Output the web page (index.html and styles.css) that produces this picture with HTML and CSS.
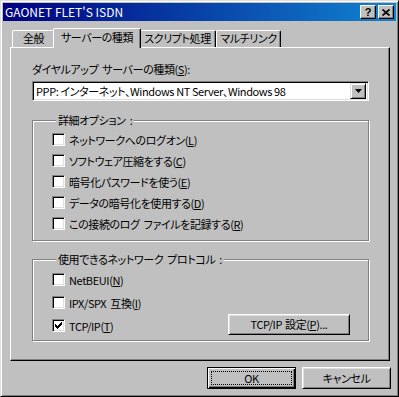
FILE: index.html
```html
<!DOCTYPE html>
<html lang="ja">
<head>
<meta charset="utf-8">
<title>GAONET FLET'S ISDN</title>
<link rel="stylesheet" href="styles.css">
</head>
<body>
<div class="window">
  <div class="titlebar">
    <span class="title">GAONET FLET'S ISDN</span>
    <div class="title-buttons">
      <span class="tbtn tbtn-help">?</span>
      <span class="tbtn"><svg width="8" height="7" viewBox="0 0 8 7"><path d="M0.5 0.5 L7.5 6.5 M7.5 0.5 L0.5 6.5" stroke="#000" stroke-width="1.7" fill="none"/></svg></span>
    </div>
  </div>
  <div class="body">
    <div class="tabs">
      <div class="tab tab-general">全般</div>
      <div class="tab tab-server active">サーバーの種類</div>
      <div class="tab tab-script">スクリプト処理</div>
      <div class="tab tab-multi">マルチリンク</div>
    </div>
    <div class="panel">
      <div class="label">ダイヤルアップ サーバーの種類(<u>S</u>):</div>
      <div class="combo">
        <span class="combo-text">PPP: インターネット、Windows NT Server、Windows 98</span>
        <span class="combo-btn"><svg width="7" height="4" viewBox="0 0 7 4"><polygon points="0,0 7,0 3.5,4" fill="#000"/></svg></span>
      </div>
      <fieldset class="group group-options">
        <legend>詳細オプション :</legend>
        <div class="check"><span class="box"></span><span>ネットワークへのログオン(<u>L</u>)</span></div>
        <div class="check"><span class="box"></span><span>ソフトウェア圧縮をする(<u>C</u>)</span></div>
        <div class="check"><span class="box"></span><span>暗号化パスワードを使う(<u>E</u>)</span></div>
        <div class="check"><span class="box"></span><span>データの暗号化を使用する(<u>D</u>)</span></div>
        <div class="check"><span class="box"></span><span>この接続のログ ファイルを記録する(<u>R</u>)</span></div>
      </fieldset>
      <fieldset class="group group-proto">
        <legend>使用できるネットワーク プロトコル :</legend>
        <div class="check"><span class="box"></span><span>NetBEUI(<u>N</u>)</span></div>
        <div class="check"><span class="box"></span><span>IPX/SPX 互換(<u>I</u>)</span></div>
        <div class="check check-last">
          <span class="box checked"><svg width="7" height="7" viewBox="0 0 7 7" shape-rendering="crispEdges"><path d="M6 0h1v3h-1v1h-1v1h-1v1h-1v1h-1v-1h-1v-1h-1v-3h1v1h1v1h1v-1h1v-1h1z" fill="#000"/></svg></span>
          <span class="check-text">TCP/IP(<u>T</u>)</span>
          <button class="btn btn-setting">TCP/IP 設定(<u>P</u>)...</button>
        </div>
      </fieldset>
    </div>
    <div class="actions">
      <button class="btn btn-default"><span class="focus">OK</span></button>
      <button class="btn">キャンセル</button>
    </div>
  </div>
</div>
</body>
</html>
```

FILE: styles.css
```css
* { box-sizing: border-box; }
html, body { margin: 0; padding: 0; }
body {
  background: #c0c0c0;
  font-family: "Noto Sans CJK JP", "Noto Sans", sans-serif;
  font-size: 11px;
  letter-spacing: -0.4px;
  color: #000;
  font-feature-settings: "palt";
}
u { text-decoration: underline; text-underline-offset: 1px; }

.window {
  width: 399px;
  height: 397px;
  background: #c0c0c0;
  border: 1px solid;
  border-color: #dfdfdf #000 #000 #dfdfdf;
  box-shadow: inset 1px 1px #fff, inset -1px -1px #808080;
  padding: 2px;
  display: flex;
  flex-direction: column;
}

.titlebar {
  height: 18px;
  background: linear-gradient(to right, #000080, #1084d0);
  display: flex;
  align-items: center;
  padding: 0 2px 0 2px;
  color: #fff;
}
.title { flex: 1; line-height: 18px; white-space: nowrap; font-size: 12px; letter-spacing: 0; }
.title-buttons { display: flex; gap: 2px; }
.tbtn {
  width: 16px;
  height: 14px;
  background: #c0c0c0;
  border: 1px solid;
  border-color: #fff #000 #000 #fff;
  box-shadow: inset -1px -1px #808080;
  display: flex;
  align-items: center;
  justify-content: center;
  color: #000;
}
.tbtn-help {
  font-family: "Liberation Sans", sans-serif;
  font-weight: bold;
  font-size: 11px;
  line-height: 12px;
  letter-spacing: 0;
}

.body {
  flex: 1;
  display: flex;
  flex-direction: column;
  padding: 6px 5px 0 7px;
}

.tabs {
  display: flex;
  align-items: flex-end;
  height: 20px;
  padding-left: 2px;
}
.tab {
  height: 17px;
  border: 1px solid;
  border-bottom: none;
  border-color: #fff #000 #000 #fff;
  border-radius: 2px 2px 0 0;
  box-shadow: inset -1px 0 #808080;
  background: #c0c0c0;
  text-align: center;
  line-height: 15px;
  white-space: nowrap;
}
.tab-general { width: 43px; }
.tab-server { width: 88px; }
.tab-script { width: 77px; }
.tab-multi { width: 65px; }
.tab.active {
  height: 20px;
  margin: 0 -2px -1px;
  position: relative;
  z-index: 1;
  line-height: 16px;
}

.panel {
  width: 380px;
  height: 314px;
  border: 1px solid;
  border-color: #fff #000 #000 #fff;
  box-shadow: inset -1px -1px #808080;
  padding: 14px 20px 0 21px;
}

.label { line-height: 14px; white-space: nowrap; word-spacing: 2px; }

.combo {
  margin-top: 5px;
  height: 20px;
  display: flex;
  align-items: center;
  background: #fff;
  border: 1px solid;
  border-color: #808080 #fff #fff #808080;
  box-shadow: inset 1px 1px #000, inset -1px -1px #dfdfdf;
  padding: 2px 2px 2px 3px;
}
.combo-text { flex: 1; white-space: nowrap; overflow: hidden; line-height: 16px; }
.combo-btn {
  width: 16px;
  height: 16px;
  background: #c0c0c0;
  border: 1px solid;
  border-color: #dfdfdf #000 #000 #dfdfdf;
  box-shadow: inset 1px 1px #fff, inset -1px -1px #808080;
  display: flex;
  align-items: center;
  justify-content: center;
}

.group {
  margin: 12px 0 0;
  min-inline-size: 0;
  border: 1px solid #808080;
  box-shadow: inset 1px 1px #fff, 1px 1px #fff;
  padding: 1px 18px 6px 19px;
}
.group legend {
  padding: 0 2px;
  margin-left: 4px;
  line-height: 15px;
  background: #c0c0c0;
  white-space: nowrap;
  word-spacing: 2px;
}
.group-proto { margin-top: 11px; padding-bottom: 3px; }

.check {
  display: flex;
  align-items: center;
  height: 21px;
  gap: 4px;
  white-space: nowrap;
  word-spacing: 2px;
}
.group-proto .check { height: 23px; }
.box {
  width: 13px;
  height: 13px;
  flex: none;
  background: #fff;
  border: 1px solid;
  border-color: #808080 #fff #fff #808080;
  box-shadow: inset 1px 1px #000, inset -1px -1px #dfdfdf;
  display: flex;
  align-items: center;
  justify-content: center;
}
.check-text { flex: 1; }

.btn {
  font: inherit;
  letter-spacing: inherit;
  word-spacing: 1px;
  color: #000;
  background: #c0c0c0;
  border: 1px solid;
  border-color: #fff #000 #000 #fff;
  box-shadow: inset 1px 1px #dfdfdf, inset -1px -1px #808080;
  padding: 0;
  width: 89px;
  height: 22px;
  line-height: 18px;
  white-space: nowrap;
}
.btn-setting { width: 122px; height: 21px; margin-top: -3px; }

.actions {
  display: flex;
  justify-content: flex-end;
  gap: 6px;
  margin-top: 6px;
}
.btn-default {
  border: 1px solid #000;
  box-shadow: inset 1px 1px #fff, inset -1px -1px #000, inset -2px -2px #808080;
  display: flex;
  align-items: center;
  justify-content: center;
  padding: 3px;
}
.focus {
  flex: 1;
  align-self: stretch;
  border: 1px dotted #000;
  line-height: 12px;
}
```
